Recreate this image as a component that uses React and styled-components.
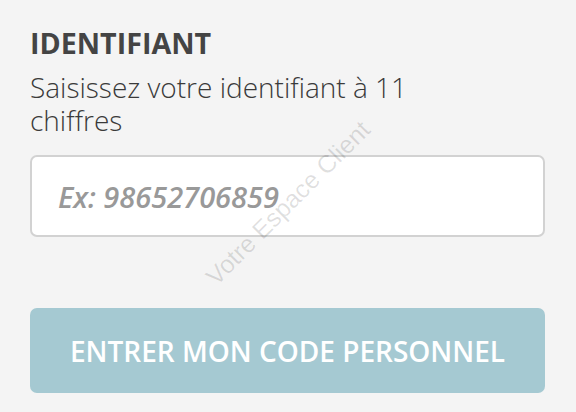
import React from "react";
import styled, { createGlobalStyle } from "styled-components";

const Global = createGlobalStyle`
  html, body { margin: 0; padding: 0; background: #f4f4f4; }
  body { font-family: "Open Sans", "Noto Sans", sans-serif; }
`;

const Page = styled.div`
  position: relative;
  box-sizing: border-box;
  width: 576px;
  height: 412px;
  padding: 25px 31px 0 30px;
  overflow: hidden;
  background: #f4f4f4;
`;

const Title = styled.h2`
  margin: 0;
  font-size: 28.7px;
  line-height: 36px;
  font-weight: 700;
  color: #444;
`;

const Hint = styled.p`
  margin: 10px 0 0;
  width: 420px;
  font-size: 28px;
  line-height: 33px;
  font-weight: 300;
  color: #3a3a3a;
`;

const Field = styled.input`
  display: block;
  box-sizing: border-box;
  width: 100%;
  height: 82px;
  margin-top: 18px;
  padding: 0 26px;
  border: 2px solid #d2d2d2;
  border-radius: 7px;
  background: #fff;
  font-family: "Open Sans", sans-serif;
  font-size: 29px;
  font-style: italic;
  font-weight: 600;
  color: #444;
  outline: none;
  &::placeholder { color: #999; opacity: 1; }
`;

const Submit = styled.button`
  display: flex;
  align-items: center;
  justify-content: center;
  width: 100%;
  height: 85px;
  margin-top: 71px;
  border: none;
  border-radius: 7px;
  background: #a5c9d2;
  color: #fff;
  font-family: "Open Sans", sans-serif;
  font-size: 28px;
  font-weight: 600;
  text-transform: uppercase;
  cursor: pointer;
`;

const Watermark = styled.div`
  position: absolute;
  left: 288px;
  top: 203px;
  transform: translate(-50%, -50%) rotate(-45deg);
  white-space: nowrap;
  font-family: "Liberation Sans", Arial, sans-serif;
  font-size: 25px;
  color: rgba(0, 0, 0, 0.12);
  pointer-events: none;
`;

export default function App() {
  return (
    <>
      <Global />
      <Page>
        <Title>IDENTIFIANT</Title>
        <Hint>Saisissez votre identifiant à 11 chiffres</Hint>
        <Field type="text" placeholder="Ex: 98652706859" />
        <Submit>Entrer mon code personnel</Submit>
        <Watermark>Votre Espace Client</Watermark>
      </Page>
    </>
  );
}
